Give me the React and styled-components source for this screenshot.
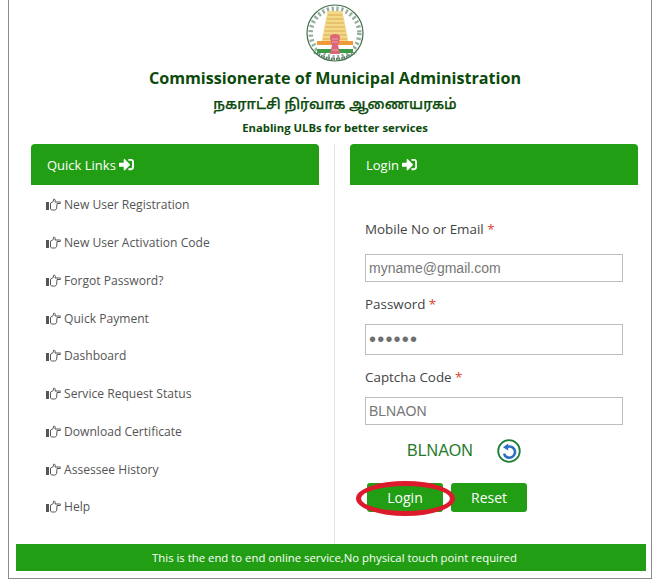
import React from "react";
import styled, { createGlobalStyle } from "styled-components";
import { FaSignInAlt } from "react-icons/fa";

const Global = createGlobalStyle`
  html, body { margin: 0; padding: 0; background: #fff; }
  body { font-family: "Open Sans", "Noto Sans", sans-serif; }
`;
const Frame = styled.div`
  box-sizing: border-box; width: 644px; height: 579px; margin-left: 8px;
  border: 1px solid #8a8a8a; border-top: none; padding: 4px 4px 0 7px;
  display: flex; flex-direction: column;
`;
const Header = styled.header`display:flex;flex-direction:column;align-items:center;height:140px;padding-left:7px;`;
const Title = styled.h1`
  margin: 2px 0 0; font: bold 16.15px/24px "Open Sans", sans-serif; color: #0b4a0b; white-space: nowrap;
`;
const Tamil = styled.div`margin-top:4px;font:500 14.3px/24px "Noto Sans Tamil","Noto Sans","DejaVu Sans",sans-serif;color:#0b4a0b;-webkit-text-stroke:.25px #0b4a0b;`;
const Tag = styled.div`margin-top:1px;font:bold 11.3px/18px "Open Sans",sans-serif;color:#0b4a0b;`;
const Columns = styled.div`display:grid;grid-template-columns:319px 1fr;height:400px;`;
const LeftCol = styled.section`padding:0 15px;border-right:1px solid #e6e6e6;`;
const RightCol = styled.section`padding:0 0 0 15px;width:288px;`;
const PanelHead = styled.div`
  height:41px;background:#229e14;color:#fff;border-radius:4px 4px 0 0;padding:0 16px;
  display:flex;align-items:center;gap:3px;font-size:13px;
`;
const LinkList = styled.ul`list-style:none;margin:0;padding:1px 0 0 15px;`;
const LinkItem = styled.li`
  height:37.75px;display:flex;align-items:center;gap:3px;font-size:12.1px;color:#555;
`;
const Form = styled.form`padding:32px 15px 0;`;
const Label = styled.label`display:block;font-size:13.4px;line-height:24px;color:#444;`;
const Star = styled.span`color:#d9432a;`;
const Input = styled.input`
  display:block;box-sizing:border-box;width:258px;height:${p=>p.$h||28}px;margin:${p=>p.$mt||13}px 0 ${p=>p.$mb||10}px;
  border:1px solid #bdbdbd;padding:0 3px;font:14px "Liberation Sans",sans-serif;color:#777;
  &::placeholder{color:#777;opacity:1;}
  &[type="password"]{font-size:20px;letter-spacing:1.2px;color:#6f6f6f;}
`;
const CaptchaRow = styled.div`display:flex;align-items:center;height:26px;padding-left:42px;gap:24px;margin-top:13px;`;
const CaptchaText = styled.span`font:16px "Liberation Sans",sans-serif;color:#1f7a2a;`;
const Buttons = styled.div`display:flex;gap:8px;margin:19px 0 0 2px;position:relative;`;
const Btn = styled.button`
  width:76px;height:29px;background:#229e14;color:#fff;border:none;border-radius:3px;font:14px "Open Sans",sans-serif;padding:0;
`;
const Ring = styled.span`
  position:absolute;left:-11px;top:-2px;width:99px;height:35px;box-sizing:border-box;border:5px solid #dd1a2b;border-radius:50%;pointer-events:none;
`;
const Footer = styled.footer`
  height:27px;width:630px;box-sizing:border-box;padding-left:7px;background:#229e14;color:#fff;font-size:11.35px;display:flex;align-items:center;justify-content:center;
`;

const Emblem = () => (
  <svg width="60" height="60" viewBox="0 0 60 60" style={{display:"block"}}>
    <circle cx="30" cy="29" r="28" fill="#fff" stroke="#3f6f4a" strokeWidth="1.2"/>
    <circle cx="30" cy="29" r="24.3" fill="none" stroke="#6b8a74" strokeWidth="4.5" strokeDasharray="2.2 2.6" opacity=".7"/>
    <path d="M22.5 7h15l6 31H16.5z" fill="#f3d98a"/>
    <path d="M23 11h14M22 15h16M21 19h18M20 23h20M19.5 27h21M18.5 31h23M18 35h24" stroke="#dca94e" strokeWidth="1"/>
    <path d="M12 37h36v4H12z" fill="#ec9a3a"/>
    <path d="M12 41h36v4H12z" fill="#fff"/>
    <path d="M12 45h36v4H12z" fill="#3c9a48"/>
    <path d="M25 33c0-4 10-4 10 0l-1 6-1 2 2 9H25l2-9-1-2z" fill="#dc6678"/>
    <path d="M27 35h6M27 38h6M27 46h6" stroke="#f0b0bb" strokeWidth=".8"/>
    <path d="M9 48q21 14 42 0" fill="none" stroke="#5f7f68" strokeWidth="2.4" strokeDasharray="1.6 1"/>
  </svg>
);
const Refresh = () => (
  <svg width="24" height="24" viewBox="0 0 24 24">
    <circle cx="12" cy="12" r="10.8" fill="#fff" stroke="#1d7f3a" strokeWidth="1.8"/>
    <path d="M8.4 9.2A5.6 5.6 0 1 1 7 14.6" fill="none" stroke="#2a6fc0" strokeWidth="2.6"/>
    <path d="M11.2 4.4v7L6 8.2z" fill="#2a6fc0"/>
  </svg>
);
const Hand = () => (
  <svg width="15" height="13" viewBox="0 0 15 13" style={{flex:"none"}}>
    <rect x="0" y="4" width="3" height="8" fill="#555"/>
    <path d="M4.5 5.2 7.2 3.6 7.6 1.2C9.2.8 9.6 2.4 9 4h5.2c.8 0 .8 1.5 0 1.5H11l-.3 4.6c-.1 1.2-1 1.9-2.2 1.9H6.2c-.8 0-1.2-.5-1.7-.9z" fill="#fff" stroke="#555" strokeWidth="1"/>
  </svg>
);

const links = ["New User Registration","New User Activation Code","Forgot Password?","Quick Payment","Dashboard","Service Request Status","Download Certificate","Assessee History","Help"];

export default function App() {
  return (
    <>
      <Global />
      <Frame>
        <Header>
          <Emblem />
          <Title>Commissionerate of Municipal Administration</Title>
          <Tamil>நகராட்சி நிர்வாக ஆணையரகம்</Tamil>
          <Tag>Enabling ULBs for better services</Tag>
        </Header>
        <Columns>
          <LeftCol>
            <PanelHead>Quick Links <FaSignInAlt size={15} /></PanelHead>
            <LinkList>
              {links.map(l => <LinkItem key={l}><Hand />{l}</LinkItem>)}
            </LinkList>
          </LeftCol>
          <RightCol>
            <PanelHead>Login <FaSignInAlt size={15} /></PanelHead>
            <Form onSubmit={e=>e.preventDefault()}>
              <Label>Mobile No or Email <Star>*</Star></Label>
              <Input placeholder="myname@gmail.com" />
              <Label>Password <Star>*</Star></Label>
              <Input type="password" defaultValue="123456" $h={31} $mt={8} />
              <Label>Captcha Code <Star>*</Star></Label>
              <Input placeholder="BLNAON" $mt={8} />
              <CaptchaRow><CaptchaText>BLNAON</CaptchaText><Refresh /></CaptchaRow>
              <Buttons>
                <Btn>Login</Btn><Btn type="reset">Reset</Btn>
                <Ring />
              </Buttons>
            </Form>
          </RightCol>
        </Columns>
        <Footer>This is the end to end online service,No physical touch point required</Footer>
      </Frame>
    </>
  );
}
